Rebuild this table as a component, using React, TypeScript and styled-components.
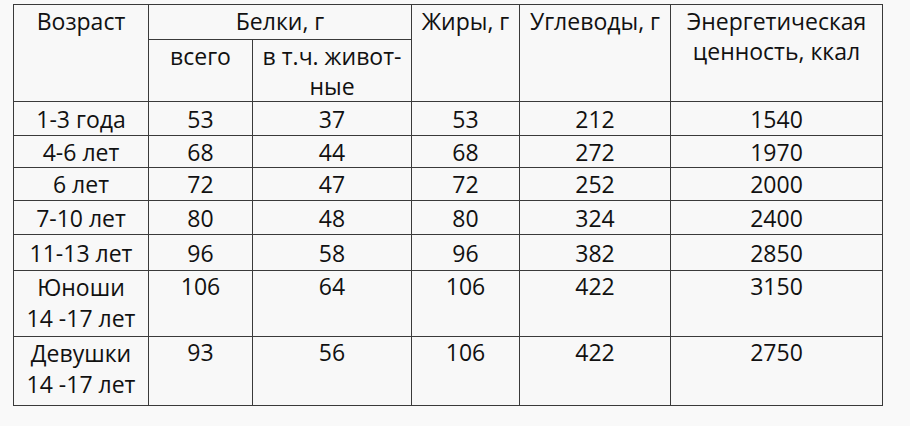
import React from "react"
import styled, { createGlobalStyle } from "styled-components"

const GlobalStyle = createGlobalStyle`
    html, body {
        margin: 0;
        padding: 0;
        background: #f9f9f9;
    }
`

const Page = styled.div`
    padding: 4px 0 0 13px;
    width: 910px;
    height: 426px;
    box-sizing: border-box;
    font-family: "Open Sans", "Liberation Sans", sans-serif;
    font-size: 23px;
    color: #111;
`

const Table = styled.table`
    border-collapse: collapse;
    table-layout: fixed;
    width: 869px;
    background: #f8f8f8;
`

const Cell = styled.td<{ $top?: boolean; $h?: number }>`
    border: 1px solid #3a3a3a;
    padding: 0;
    text-align: center;
    vertical-align: ${p => (p.$top ? "top" : "middle")};
    line-height: 30px;
    height: ${p => (p.$h ? `${p.$h}px` : "auto")};
    white-space: nowrap;
`

const HeadCell = styled(Cell)`
    vertical-align: top;
    padding-top: 1px;
`

const TwoLine = styled.div`
    line-height: 31px;
    padding-top: 1px;
`

type Row = { age: string[]; total: string; animal: string; fat: string; carbs: string; kcal: string; h: number }

const rows: Row[] = [
    { age: ["1-3 года"], total: "53", animal: "37", fat: "53", carbs: "212", kcal: "1540", h: 33 },
    { age: ["4-6 лет"], total: "68", animal: "44", fat: "68", carbs: "272", kcal: "1970", h: 31 },
    { age: ["6 лет"], total: "72", animal: "47", fat: "72", carbs: "252", kcal: "2000", h: 32 },
    { age: ["7-10 лет"], total: "80", animal: "48", fat: "80", carbs: "324", kcal: "2400", h: 33 },
    { age: ["11-13 лет"], total: "96", animal: "58", fat: "96", carbs: "382", kcal: "2850", h: 35 },
    { age: ["Юноши", "14 -17 лет"], total: "106", animal: "64", fat: "106", carbs: "422", kcal: "3150", h: 65 },
    { age: ["Девушки", "14 -17 лет"], total: "93", animal: "56", fat: "106", carbs: "422", kcal: "2750", h: 68 },
]

export default function App() {
    return <Page>
        <GlobalStyle />
        <Table>
            <colgroup>
                <col style={{ width: 135 }} />
                <col style={{ width: 104 }} />
                <col style={{ width: 159 }} />
                <col style={{ width: 108 }} />
                <col style={{ width: 151 }} />
                <col style={{ width: 212 }} />
            </colgroup>
            <tbody>
                <tr>
                    <HeadCell rowSpan={2}>Возраст</HeadCell>
                    <HeadCell colSpan={2} $h={33}>Белки, г</HeadCell>
                    <HeadCell rowSpan={2}>Жиры, г</HeadCell>
                    <HeadCell rowSpan={2}>Углеводы, г</HeadCell>
                    <HeadCell rowSpan={2}>Энергетическая<br />ценность, ккал</HeadCell>
                </tr>
                <tr>
                    <HeadCell $h={60}>всего</HeadCell>
                    <HeadCell $h={60}>в т.ч. живот-<br />ные</HeadCell>
                </tr>
                {rows.map(r => {
                    const top = r.age.length > 1
                    return <tr key={r.age.join(" ")}>
                        <Cell $top={top} $h={r.h}>
                            {top ? <TwoLine>{r.age[0]}<br />{r.age[1]}</TwoLine> : r.age[0]}
                        </Cell>
                        <Cell $top={top}>{r.total}</Cell>
                        <Cell $top={top}>{r.animal}</Cell>
                        <Cell $top={top}>{r.fat}</Cell>
                        <Cell $top={top}>{r.carbs}</Cell>
                        <Cell $top={top}>{r.kcal}</Cell>
                    </tr>
                })}
            </tbody>
        </Table>
    </Page>
}
